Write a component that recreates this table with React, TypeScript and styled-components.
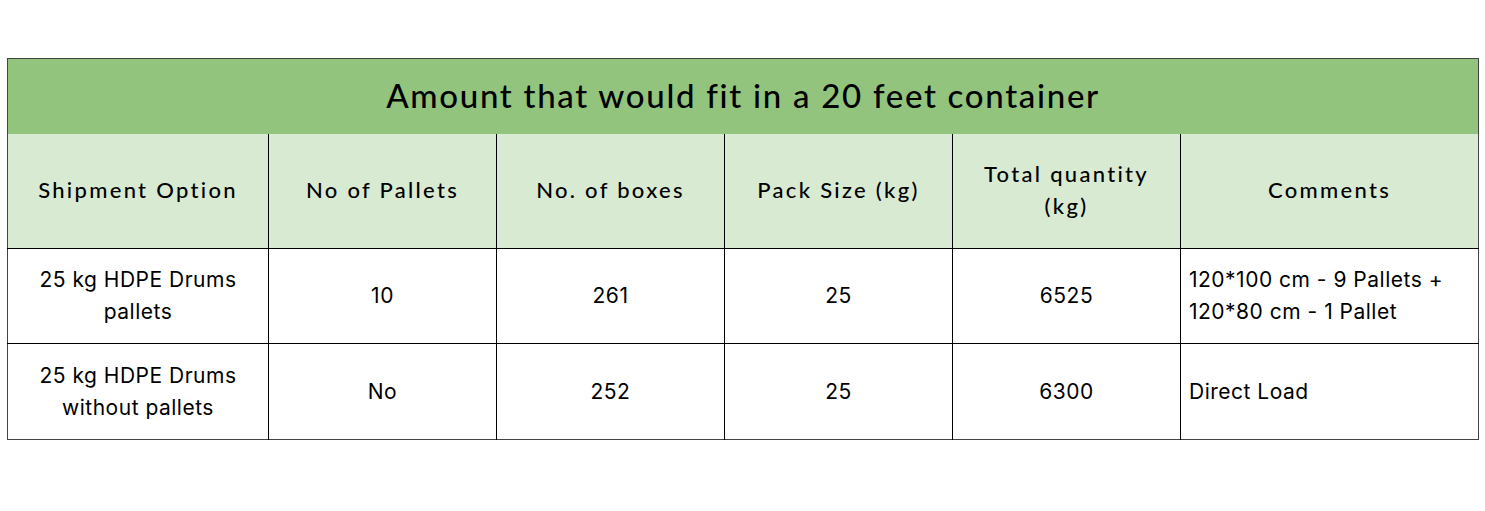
import React, { FC } from 'react';
import styled, { createGlobalStyle, css } from 'styled-components';

const GlobalStyle = createGlobalStyle`
	html, body {
		margin: 0;
		padding: 0;
		background: #ffffff;
	}
`;

const Page = styled.div`
	padding: 58px 7px 0 7px;
	width: 1485px;
	box-sizing: border-box;
`;

const Table = styled.table`
	width: 1471px;
	border-collapse: collapse;
	table-layout: fixed;
	border: 1.5px solid #444;
	color: #000;
`;

const TitleCell = styled.th`
	height: 71px;
	padding: 0 0 4px 0;
	background: #93c47d;
	font-family: 'Lato', sans-serif;
	font-weight: 500;
	font-size: 33px;
	letter-spacing: 1.7px;
	text-align: center;
	vertical-align: middle;
`;

const HeadCell = styled.th`
	height: 112px;
	padding: 0 10px 2px;
	background: #d9ead3;
	border-left: 1px solid #000;
	border-bottom: 1px solid #000;
	font-family: 'Lato', sans-serif;
	font-weight: 500;
	font-size: 22px;
	letter-spacing: 2.3px;
	line-height: 32px;
	text-align: center;
	vertical-align: middle;
	&:first-child {
		border-left: none;
	}
`;

interface CellProps {
	$left?: boolean;
}

const Cell = styled.td<CellProps>`
	padding: 0 10px;
	border-left: 1px solid #000;
	border-top: 1px solid #000;
	font-family: 'Inter', sans-serif;
	font-feature-settings: 'calt' 0;
	font-size: 21px;
	letter-spacing: 0.5px;
	line-height: 32px;
	text-align: center;
	vertical-align: middle;
	&:first-child {
		border-left: none;
	}
	${({ $left }) =>
		$left &&
		css`
			text-align: left;
			padding: 0 8px;
		`}
`;

interface RowProps {
	height: number;
}

const Row = styled.tr<RowProps>`
	height: ${({ height }) => height}px;
`;

interface Shipment {
	option: string[];
	pallets: string;
	boxes: string;
	pack: string;
	total: string;
	comments: string[];
	height: number;
}

const columns = [
	{ label: ['Shipment Option'], width: 261 },
	{ label: ['No of Pallets'], width: 228 },
	{ label: ['No. of boxes'], width: 228 },
	{ label: ['Pack Size (kg)'], width: 228 },
	{ label: ['Total quantity', '(kg)'], width: 228 },
	{ label: ['Comments'], width: 298 },
];

const shipments: Shipment[] = [
	{
		option: ['25 kg HDPE Drums', 'pallets'],
		pallets: '10',
		boxes: '261',
		pack: '25',
		total: '6525',
		comments: ['120*100 cm - 9 Pallets +', '120*80 cm - 1 Pallet'],
		height: 95,
	},
	{
		option: ['25 kg HDPE Drums', 'without pallets'],
		pallets: 'No',
		boxes: '252',
		pack: '25',
		total: '6300',
		comments: ['Direct Load'],
		height: 96,
	},
];

const lines = (parts: string[]) =>
	parts.map((p, i) => (
		<React.Fragment key={i}>
			{i > 0 && <br />}
			{p}
		</React.Fragment>
	));

const App: FC = () => {
	return (
		<>
			<GlobalStyle />
			<Page>
				<Table>
					<colgroup>
						{columns.map((c, i) => (
							<col key={i} style={{ width: c.width }} />
						))}
					</colgroup>
					<thead>
						<tr>
							<TitleCell colSpan={6}>Amount that would fit in a 20 feet container</TitleCell>
						</tr>
						<tr>
							{columns.map((c, i) => (
								<HeadCell key={i}>{lines(c.label)}</HeadCell>
							))}
						</tr>
					</thead>
					<tbody>
						{shipments.map((s, i) => (
							<Row key={i} height={s.height}>
								<Cell>{lines(s.option)}</Cell>
								<Cell>{s.pallets}</Cell>
								<Cell>{s.boxes}</Cell>
								<Cell>{s.pack}</Cell>
								<Cell>{s.total}</Cell>
								<Cell $left>{lines(s.comments)}</Cell>
							</Row>
						))}
					</tbody>
				</Table>
			</Page>
		</>
	);
};

export default App;
